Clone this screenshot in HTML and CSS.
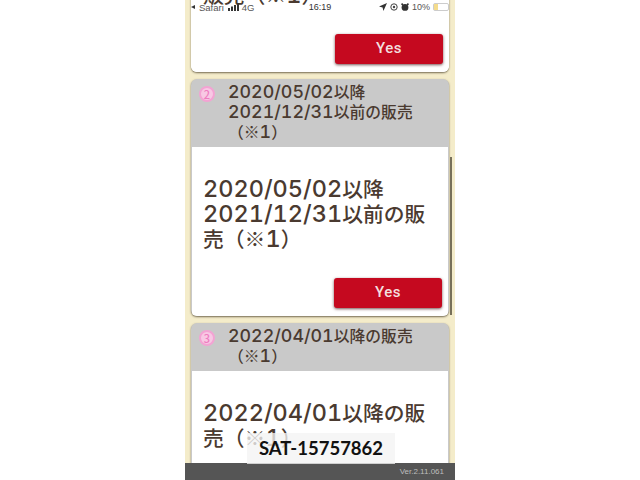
FILE: index.html
```html
<!DOCTYPE html>
<html lang="ja">
<head>
<meta charset="utf-8">
<title>販売</title>
<link rel="stylesheet" href="styles.css">
</head>
<body>
<div class="phone">
  <div class="statusbar">
    <div class="st-left"><span class="back"></span><span>Safari</span>
      <svg class="signal" width="12" height="8" viewBox="0 0 12 8"><rect x="0" y="5" width="2" height="3"/><rect x="3" y="3.5" width="2" height="4.5"/><rect x="6" y="2" width="2" height="6"/><rect x="9" y="0" width="2" height="8"/></svg>
      <span>4G</span></div>
    <div class="st-time">16:19</div>
    <div class="st-right">
      <svg width="8" height="8" viewBox="0 0 8 8"><path d="M8 0 L0 3.6 L3.6 4.4 L4.4 8 Z" fill="#333"/></svg>
      <svg width="8" height="8" viewBox="0 0 8 8"><circle cx="4" cy="4" r="3.2" fill="none" stroke="#444" stroke-width="1"/><circle cx="4" cy="4" r="1.2" fill="#444"/></svg>
      <svg width="8" height="8" viewBox="0 0 8 8"><circle cx="4" cy="4.4" r="3.4" fill="#333"/><circle cx="1.2" cy="1.2" r="1" fill="#333"/><circle cx="6.8" cy="1.2" r="1" fill="#333"/></svg>
      <span>10%</span>
      <span class="battery"><span class="battery-fill"></span></span>
    </div>
  </div>

  <div class="scrollbar"></div>

  <main class="list">
    <section class="card card-first">
      <div class="body body-first">
        <p class="title">販売（※<span class="d">1</span>）</p>
        <div class="actions"><button class="yes">Yes</button></div>
      </div>
    </section>

    <section class="card">
      <header class="head"><span class="num">2</span><h2 class="head-text"><span class="d">2020/05/02</span>以降<br><span class="d">2021/12/31</span>以前の販売<br>（※<span class="d">1</span>）</h2></header>
      <div class="body">
        <p class="title"><span class="d">2020/05/02</span>以降<br><span class="d">2021/12/31</span>以前の販売（※<span class="d">1</span>）</p>
        <div class="actions"><button class="yes">Yes</button></div>
      </div>
    </section>

    <section class="card">
      <header class="head"><span class="num">3</span><h2 class="head-text"><span class="d">2022/04/01</span>以降の販売<br>（※<span class="d">1</span>）</h2></header>
      <div class="body body-last">
        <p class="title"><span class="d">2022/04/01</span>以降の販売（※<span class="d">1</span>）</p>
      </div>
    </section>
  </main>

  <footer class="footer">Ver.2.11.061</footer>
  <div class="stamp">SAT-15757862</div>
</div>
</body>
</html>
```
FILE: styles.css
```css
* { box-sizing: border-box; }
html, body { margin: 0; height: 100%; background: #fff; overflow: hidden; }
body { display: flex; justify-content: center; font-family: "Noto Sans CJK JP", sans-serif; color: #4a3a30; }

.phone { position: relative; width: 270px; height: 480px; background: #f4ecca; overflow: hidden; }

.statusbar { position: absolute; top: 0; left: 0; right: 0; height: 14px; padding: 0 6px 0 6px; display: grid; grid-template-columns: 1fr auto 1fr; align-items: center; font-family: "Liberation Sans", sans-serif; font-size: 9.5px; color: #555; z-index: 2; }
.st-left { display: flex; align-items: center; gap: 3px; }
.back { width: 0; height: 0; border-style: solid; border-width: 2.5px 4px 2.5px 0; border-color: transparent #333 transparent transparent; margin-right: 1px; }
.signal { fill: #333; margin: 0 -1px 0 1px; }
.st-time { color: #333; font-size: 9px; }
.st-right { display: flex; align-items: center; justify-content: flex-end; gap: 3px; font-size: 9px; }
.battery { width: 16px; height: 8px; border: 1px solid #ccc; border-radius: 2px; background: #fff; display: block; }
.battery-fill { display: block; width: 4px; height: 100%; background: #f4dc8c; }

.scrollbar { position: absolute; left: 265px; top: 157px; width: 2px; height: 158px; background: #77705a; z-index: 2; }

.list { display: flex; flex-direction: column; gap: 7px; padding: 0 6px; margin-top: -18px; }
.card { border-radius: 6px; background: #c9c9c9; overflow: hidden; box-shadow: 0 1px 2px rgba(60,50,30,.7); flex: none; }
.card-first { background: #fff; }

.d { font-family: "Inter", sans-serif; font-variant-numeric: tabular-nums; font-size: 1.13em; line-height: 1; }

.head { display: flex; gap: 13px; padding: 3px 8px 5px 8px; }
.num { width: 16px; height: 16px; margin-top: 4px; flex: none; border-radius: 50%; border: 2px solid #f3a3d3; background: #f8c8e4; color: #ee7cc0; font-size: 11px; font-weight: 500; line-height: 12px; text-align: center; }
.head-text { margin: 0; font-size: 15.8px; font-weight: 500; line-height: 20px; }

.body { background: #fff; margin: 0 1px 0 1px; padding: 29px 6px 0 11px; }
.body-first { margin: 0; padding: 0 6px 0 12px; }
.body-last { padding-bottom: 60px; }
.title { margin: 0; font-size: 20.8px; font-weight: 500; line-height: 25px; }
.actions { display: flex; justify-content: flex-end; margin-top: 27px; padding-bottom: 8px; }
.yes { width: 108px; height: 30px; border: 0; border-radius: 3px; background: #c5091f; color: #f3dfdf; font-family: "Roboto", sans-serif; font-weight: 500; font-size: 15px; letter-spacing: .5px; box-shadow: 0 1px 3px rgba(60,10,10,.7); padding: 0 0 2px; }

.footer { position: absolute; left: 0; right: 0; bottom: 0; height: 17px; background: #555; color: #bdbdbd; font-family: "Liberation Sans", sans-serif; font-size: 8px; line-height: 17px; text-align: right; padding-right: 11px; }
.stamp { position: absolute; left: 62px; top: 433px; width: 148px; height: 31px; background: rgba(243,243,243,.78); color: #111; font-family: "Lato", sans-serif; font-weight: 700; font-size: 18.5px; line-height: 31px; text-align: center; }
```
